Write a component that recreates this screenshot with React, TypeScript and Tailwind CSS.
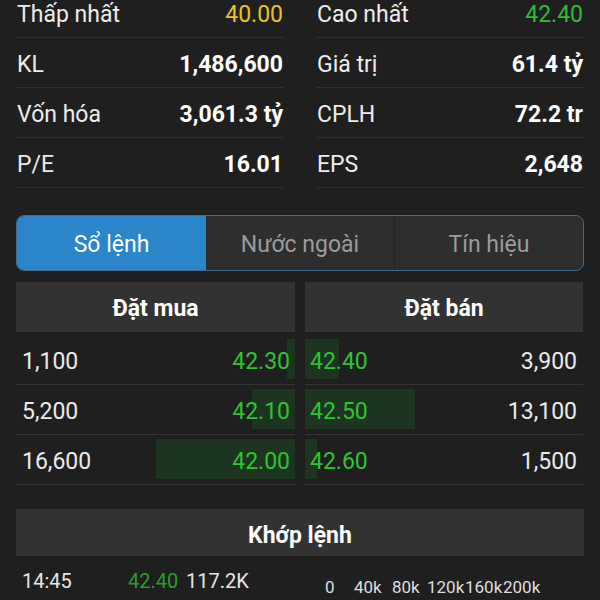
import React from 'react';

const stats = [
  { l: 'Thấp nhất', v: '40.00', vc: 'text-[#e9c22b] font-normal', r: 'Cao nhất', rv: '42.40', rvc: 'text-[#2fbd2f] font-normal' },
  { l: 'KL', v: '1,486,600', r: 'Giá trị', rv: '61.4 tỷ' },
  { l: 'Vốn hóa', v: '3,061.3 tỷ', r: 'CPLH', rv: '72.2 tr' },
  { l: 'P/E', v: '16.01', r: 'EPS', rv: '2,648' },
];

const bids = [
  { q: '1,100', p: '42.30', w: 8 },
  { q: '5,200', p: '42.10', w: 43 },
  { q: '16,600', p: '42.00', w: 139 },
];

const asks = [
  { q: '3,900', p: '42.40', w: 34 },
  { q: '13,100', p: '42.50', w: 110 },
  { q: '1,500', p: '42.60', w: 12 },
];

const StatCell: React.FC<{ label: string; value: string; cls?: string }> = ({ label, value, cls }) => (
  <div className="flex h-[50px] items-center justify-between border-b border-[#2f2f2f] pt-[6px] px-[1px]">
    <span className="text-[23px] text-[#ececec]">{label}</span>
    <span className={`text-[23px] ${cls || 'font-bold text-white'}`}>{value}</span>
  </div>
);

export default function App() {
  return (
    <div
      className="w-[600px] h-[600px] overflow-hidden bg-[#1f1f1f] px-4 text-white"
      style={{ fontFamily: 'Roboto, "Noto Sans", sans-serif' }}
    >
      {/* thống kê */}
      <div className="-mt-[12px] grid grid-cols-2 gap-x-8">
        {stats.map((s, i) => (
          <React.Fragment key={i}>
            <StatCell label={s.l} value={s.v} cls={s.vc} />
            <StatCell label={s.r} value={s.rv} cls={s.rvc} />
          </React.Fragment>
        ))}
      </div>

      {/* tabs */}
      <div className="mt-[27px] flex h-[56px] overflow-hidden rounded-[8px] border border-[#3f6a8c] bg-[#2e2e2e]">
        <div className="flex w-[189px] items-center justify-center bg-[#2a86c8] pt-[4px] text-[23px] text-white">Sổ lệnh</div>
        <div className="flex w-[189px] items-center justify-center border-r border-[#252525] pt-[4px] text-[23px] text-[#9b9b9b]">Nước ngoài</div>
        <div className="flex flex-1 items-center justify-center pt-[4px] text-[23px] text-[#9b9b9b]">Tín hiệu</div>
      </div>

      {/* sổ lệnh */}
      <div className="mt-[11px] grid grid-cols-[279px_278px] gap-x-[10px]">
        <div>
          <div className="flex h-[50px] items-center justify-center bg-[#323232] pt-[5px] text-[23px] font-bold">Đặt mua</div>
          <div className="mt-[3px]">
            {bids.map((b, i) => (
              <div key={i} className="relative flex h-[50px] items-center justify-between border-b border-[#333] pt-[6px] pl-[6px] pr-[5px]">
                <div className="absolute right-0 top-[4px] bottom-[5px] bg-[#1d3520]" style={{ width: b.w }} />
                <span className="relative text-[23px] text-[#eaeaea]">{b.q}</span>
                <span className="relative text-[23px] text-[#2fc42f]">{b.p}</span>
              </div>
            ))}
          </div>
        </div>
        <div>
          <div className="flex h-[50px] items-center justify-center bg-[#323232] pt-[5px] text-[23px] font-bold">Đặt bán</div>
          <div className="mt-[3px]">
            {asks.map((a, i) => (
              <div key={i} className="relative flex h-[50px] items-center justify-between border-b border-[#333] pt-[6px] pl-[5px] pr-[6px]">
                <div className="absolute left-0 top-[4px] bottom-[5px] bg-[#1d3520]" style={{ width: a.w }} />
                <span className="relative text-[23px] text-[#2fc42f]">{a.p}</span>
                <span className="relative text-[23px] text-[#eaeaea]">{a.q}</span>
              </div>
            ))}
          </div>
        </div>
      </div>

      {/* khớp lệnh */}
      <div className="mt-[24px] flex h-[47px] items-center justify-center bg-[#323232] pt-[8px] text-[23px] font-bold">Khớp lệnh</div>
      <div className="flex items-start pt-[10px]">
        <div className="w-[309px] shrink-0">
          <div className="flex w-[208px] items-center whitespace-nowrap border-b border-[#333] pb-[6px] pl-[6px]">
            <span className="w-[106px] shrink-0 text-[20px] text-[#e6e6e6]">14:45</span>
            <span className="w-[58px] shrink-0 text-[20px] text-[#2a9d2a]">42.40</span>
            <span className="shrink-0 text-[20px] text-[#e6e6e6]">117.2K</span>
          </div>
        </div>
        <div className="flex whitespace-nowrap pt-[9px] text-[17px] text-[#dedede]">
          <span className="w-[29px]">0</span>
          <span className="w-[38px]">40k</span>
          <span className="w-[35px]">80k</span>
          <span className="w-[38px]">120k</span>
          <span className="w-[38px]">160k</span>
          <span>200k</span>
        </div>
      </div>
    </div>
  );
}
